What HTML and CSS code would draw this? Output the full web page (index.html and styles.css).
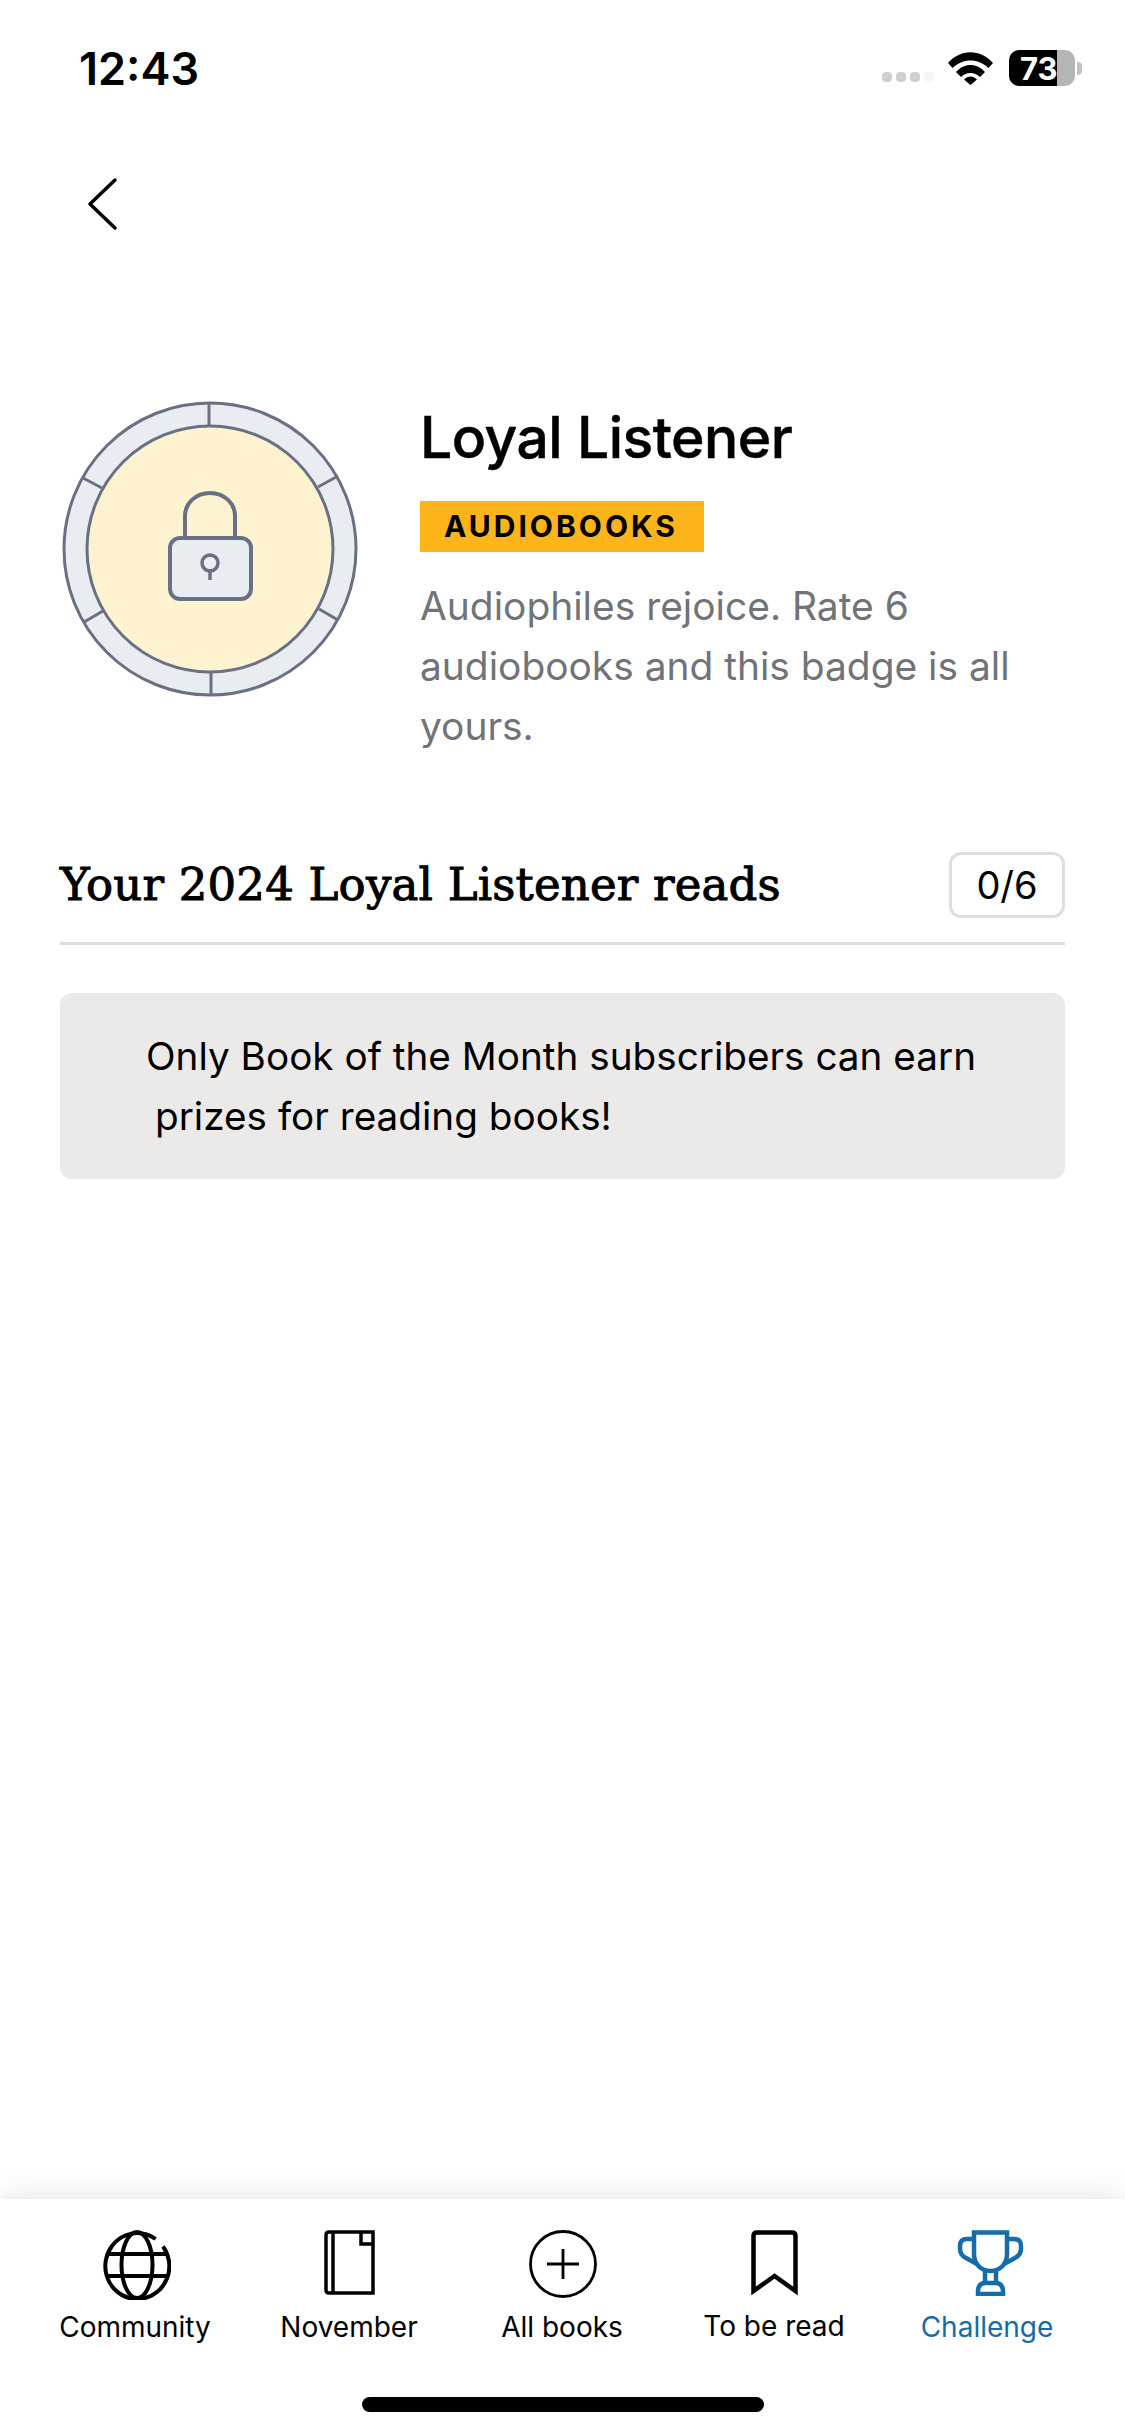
FILE: index.html
```html
<!DOCTYPE html>
<html lang="en">
<head>
  <meta charset="UTF-8" />
  <meta name="viewport" content="width=device-width, initial-scale=1.0"/>
  <title>Loyal Listener</title>
  <link rel="stylesheet" href="styles.css">
</head>
<body>

  <!-- status bar -->
  <div class="status-bar">
    <span class="clock">12:43</span>
    <div class="status-icons">
      <div class="signal"><i></i><i></i><i></i><i class="faint"></i></div>
      <svg class="wifi" width="45" height="33" viewBox="0 0 45 33">
        <path d="M0 11C12.500 -3.500 32.500 -3.500 45 11L40.500 16C30 6 15 6 4.500 16Z"/>
        <path d="M8 20C16 10.500 29 10.500 37 20L32 25C26.500 19.500 18.500 19.500 13 25Z"/>
        <path d="M16 27.500C20 23.500 25 23.500 29 27.500L22.500 33Z"/>
      </svg>
      <div class="battery"><div class="battery-body"><span>73</span></div><div class="battery-nub"></div></div>
    </div>
  </div>

  <main class="content">
    <div class="back-row">
      <svg width="32" height="56" viewBox="0 0 32 56">
        <path d="M28 4L3 28L28 52" fill="none" stroke="#000" stroke-width="3.500" stroke-linecap="round" stroke-linejoin="round"/>
      </svg>
    </div>

    <!-- badge + description -->
    <section class="hero">
      <svg class="badge" width="300" height="300" viewBox="0 0 300 300">
        <circle cx="150" cy="150" r="146" fill="#e9edf2" stroke="#6a7084" stroke-width="3"/>
        <circle cx="150" cy="150" r="123" fill="#fef3d0" stroke="#6a7084" stroke-width="3"/>
        <g stroke="#6a7084" stroke-width="3">
          <path d="M149 4V27"/>
          <path d="M278 77L258 88"/>
          <path d="M259 210L278 221"/>
          <path d="M151 273V296"/>
          <path d="M24 223L43 212"/>
          <path d="M23 79L42 89"/>
        </g>
        <path d="M125 139V117C125 104 136 94 150 94C164 94 175 104 175 117V139" fill="none" stroke="#6a7084" stroke-width="4"/>
        <rect x="110" y="139" width="81" height="61" rx="10" fill="#e9edf2" stroke="#6a7084" stroke-width="4"/>
        <circle cx="150" cy="164" r="8" fill="none" stroke="#6a7084" stroke-width="3.500"/>
        <path d="M150 172V181" stroke="#6a7084" stroke-width="3.500"/>
      </svg>
      <div class="hero-text">
        <h1>Loyal Listener</h1>
        <span class="tag">AUDIOBOOKS</span>
        <p>Audiophiles rejoice. Rate 6<br>audiobooks and this badge is all<br>yours.</p>
      </div>
    </section>

    <div class="reads-head">
      <h2>Your 2024 Loyal Listener reads</h2>
      <span class="count">0/6</span>
    </div>

    <div class="notice">Only Book of the Month subscribers can earn<br><span class="indent">prizes for reading books!</span></div>
  </main>

  <!-- bottom tabs -->
  <nav class="tabs">
    <a class="tab">
      <svg width="68" height="70" viewBox="0 0 68 70" fill="none" stroke="#000" stroke-width="4">
        <path d="M60 16.400A32 33 0 1 1 52.600 9"/>
        <ellipse cx="34" cy="35" rx="15.500" ry="33"/>
        <path d="M5 24H63M5 46H63"/>
      </svg>
      <span>Community</span>
    </a>
    <a class="tab">
      <svg width="51" height="65" viewBox="0 0 51 65" fill="none" stroke="#000" stroke-width="3.500">
        <path d="M49 2H5Q2 2 2 5V60Q2 63 5 63H49Z"/>
        <path d="M9 2V63"/>
        <path d="M37 2V14H49"/>
      </svg>
      <span>November</span>
    </a>
    <a class="tab">
      <svg width="68" height="68" viewBox="0 0 68 68" fill="none" stroke="#000" stroke-width="2.800">
        <circle cx="34" cy="34" r="32.500"/>
        <path d="M18 34H50M34 19V49"/>
      </svg>
      <span>All books</span>
    </a>
    <a class="tab tab-up">
      <svg width="47" height="65" viewBox="0 0 47 65" fill="none" stroke="#000" stroke-width="4.500">
        <path d="M2.500 61V6Q2.500 2.500 6 2.500H41Q44.500 2.500 44.500 6V61L23.500 46Z"/>
      </svg>
      <span>To be read</span>
    </a>
    <a class="tab active">
      <svg width="67" height="66" viewBox="0 0 67 66" fill="none" stroke="#166ca8" stroke-width="4.500">
        <path d="M17 2.500H50V24C50 34 43 41 33.500 41C24 41 17 34 17 24Z"/>
        <path d="M17 9H10Q3 9 3 16V19Q3 25 9 28L20 34"/>
        <path d="M50 9H57Q64 9 64 16V19Q64 25 58 28L47 34"/>
        <path d="M28 41V53M39 41V53"/>
        <path d="M21 64V60Q22 53 28 53H39Q45 53 46 60V64Z"/>
      </svg>
      <span>Challenge</span>
    </a>
  </nav>
  <div class="home-bar-wrap"><div class="home-bar"></div></div>

</body>
</html>
```

FILE: styles.css
```css
/* page */
* { box-sizing: border-box; }
body {
  margin: 0;
  width: 1125px;
  height: 2436px;
  display: flex;
  flex-direction: column;
  background: #fff;
  color: #000;
  font-family: "Inter", "Liberation Sans", sans-serif;
  overflow: hidden;
}

/* status bar */
.status-bar {
  height: 136px;
  display: flex;
  align-items: center;
  justify-content: space-between;
  padding: 0 43px 0 79px;
}
.clock { font-size: 45px; font-weight: 600; letter-spacing: 0; }
.status-icons { display: flex; align-items: center; }
.signal { display: flex; gap: 4px; margin: 18px 14px 0 0; }
.signal i { width: 10px; height: 10px; border-radius: 4px; background: #cfcfcf; }
.signal i.faint { background: #f6f6f6; }
.wifi { margin-right: 16px; fill: #000; }
.battery { display: flex; align-items: center; gap: 2px; }
.battery-body {
  width: 66px; height: 36px;
  border-radius: 10px;
  background: linear-gradient(90deg, #000 48px, #b5b5b5 48px);
  color: #fff;
  font-size: 31px; font-weight: 700;
  display: flex; align-items: center;
  padding-left: 11px;
}
.battery-nub { width: 5px; height: 13px; background: #c2c2c2; border-radius: 0 4px 4px 0; }

/* main */
.content { flex: 1; padding: 0 60px; }
.back-row { padding: 40px 0 0 27px; height: 96px; }

.hero { display: flex; gap: 60px; margin-top: 167px; }
.badge { flex: none; }
.hero-text { margin-top: 4px; }
h1 {
  margin: 0;
  font-size: 57px; line-height: 70px; font-weight: 550;
  letter-spacing: -0.5px;
  -webkit-text-stroke: 0.5px #000;
}
.tag {
  display: block;
  width: 284px; height: 51px;
  margin-top: 28px;
  background: #fbb41a;
  font-size: 30px; line-height: 51px; font-weight: 700;
  letter-spacing: 3px;
  padding-left: 24px;
}
.hero-text p {
  margin: 24px 0 0;
  font-size: 38.900px; line-height: 60px;
  color: #707377;
}

.reads-head {
  display: flex;
  align-items: center;
  justify-content: space-between;
  margin-top: 96px;
  padding-bottom: 24px;
  border-bottom: 3px solid #dedede;
}
h2 {
  margin: 0;
  font-family: "DejaVu Serif", serif;
  font-size: 45px; font-weight: 400; line-height: 66px;
  letter-spacing: 0.2px;
  -webkit-text-stroke: 1px #000;
}
.count {
  width: 116px; height: 66px;
  border: 3px solid #dedede; border-radius: 12px;
  display: flex; align-items: center; justify-content: center;
  font-size: 38px;
}

.notice {
  margin-top: 48px;
  height: 186px;
  padding: 33px 0 0 86px;
  background: #ebeae8;
  border-radius: 12px;
  font-size: 38.700px; line-height: 60px;
}
.indent { margin-left: 9px; }

/* bottom tabs */
.tabs {
  height: 198px;
  flex: none;
  background: #fff;
  box-shadow: 0 0 30px rgba(0,0,0,0.12);
  display: grid;
  grid-template-columns: 214px 214px 212px 212px 214px;
  padding: 31px 0 0 28px;
  position: relative;
}
.tab {
  display: flex;
  flex-direction: column;
  align-items: center;
  font-size: 28px;
  height: 114px;
  justify-content: space-between;
}
.tab-up { height: 113px; }
.tab svg { display: block; }
.tab:nth-child(1) svg { margin-left: 4px; }
.tab:nth-child(3) svg { margin-left: 2px; }
.tab:nth-child(5) svg { margin-left: 7px; }
.tab.active { color: #166ca8; }

.home-bar-wrap { height: 39px; flex: none; background: #fff; position: relative; }
.home-bar { width: 402px; height: 15px; margin-left: 362px; border-radius: 8px; background: #000; }
```
